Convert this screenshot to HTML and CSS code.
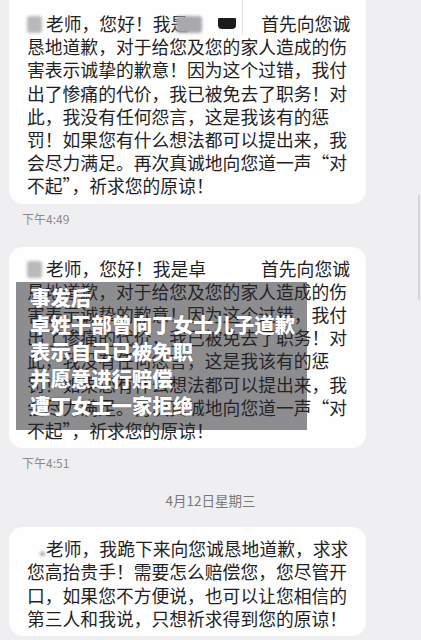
FILE: index.html
```html
<!DOCTYPE html>
<html lang="zh-CN">
<head>
<meta charset="UTF-8">
<meta name="viewport" content="width=device-width, initial-scale=1.0">
<title>短信</title>
<link rel="stylesheet" href="styles.css">
</head>
<body>
<div class="chat">
  <div class="bubble first">
    <span class="smudge"></span>
    <p class="msg">
      <span class="blur name"></span>老师，您好！我是<span class="blur hide"></span><span class="dark"></span><span class="gap"></span>首先向您诚<br>
      恳地道歉，对于给您及您的家人造成的伤<br>
      害表示诚挚的歉意！因为这个过错，我付<br>
      出了惨痛的代价，我已被免去了职务！对<br>
      此，我没有任何怨言，这是我该有的惩<br>
      罚！如果您有什么想法都可以提出来，我<br>
      会尽力满足。再次真诚地向您道一声“对<br>
      不起”，祈求您的原谅！
    </p>
  </div>
  <div class="time">下午4:49</div>

  <div class="bubble">
    <p class="msg">
      <span class="blur name"></span>老师，您好！我是卓<span class="gap wide"></span>首先向您诚<br>
      恳地道歉，对于给您及您的家人造成的伤<br>
      害表示诚挚的歉意！因为这个过错，我付<br>
      出了惨痛的代价，我已被免去了职务！对<br>
      此，我没有任何怨言，这是我该有的惩<br>
      罚！如果您有什么想法都可以提出来，我<br>
      会尽力满足。再次真诚地向您道一声“对<br>
      不起”，祈求您的原谅！
    </p>
    <div class="caption">
      事发后<br>
      卓姓干部曾向丁女士儿子道歉<br>
      表示自己已被免职<br>
      并愿意进行赔偿<br>
      遭丁女士一家拒绝
    </div>
  </div>
  <div class="time">下午4:51</div>

  <div class="date">4月12日星期三</div>

  <div class="bubble">
    <p class="msg">
      <span class="blur dot"></span>老师，我跪下来向您诚恳地道歉，求求<br>
      您高抬贵手！需要怎么赔偿您，您尽管开<br>
      口，如果您不方便说，也可以让您相信的<br>
      第三人和我说，只想祈求得到您的原谅！
    </p>
  </div>
</div>
<div class="scroll"></div>
</body>
</html>
```

FILE: styles.css
```css
body {
  margin: 0;
  background-color: #efeef1;
  font-family: "Noto Sans CJK SC", "Noto Sans", sans-serif;
  color: #1f1f1f;
  overflow: hidden;
  height: 640px;
  position: relative;
}

.chat {
  display: flex;
  flex-direction: column;
  align-items: flex-start;
  padding: 0 55px 0 9px;
}

/* message bubbles */
.bubble {
  position: relative;
  width: 321px;
  background-color: #fefefe;
  border-radius: 14px;
  padding: 10px 18px 6px 18px;
  margin-top: 21px;
}
.bubble.first {
  margin-top: 0;
  padding-top: 12px;
  border-top-left-radius: 0;
  border-top-right-radius: 0;
}

.msg {
  margin: 0;
  font-size: 17.8px;
  line-height: 23.2px;
  white-space: nowrap;
}

/* blurred names */
.blur {
  display: inline-block;
  vertical-align: -2px;
  height: 17px;
  border-radius: 3px;
  filter: blur(1.5px);
}
.name {
  width: 15px;
  margin-right: 4px;
  background-color: #b9b9bc;
}
.hide {
  width: 26px;
  margin-left: -12px;
  background-color: #a9a9ad;
}
.dot {
  width: 5px;
  height: 4px;
  margin: 0 1px 0 13px;
  vertical-align: 0;
  background-color: #9a9a9a;
}
.dark {
  display: inline-block;
  width: 18px;
  height: 11px;
  margin-left: 16px;
  vertical-align: 2px;
  background-color: #1c1c1c;
  border-radius: 1px 1px 4px 4px;
}
.gap {
  display: inline-block;
  width: 25px;
}
.gap.wide {
  width: 55px;
}

.smudge {
  position: absolute;
  left: 233px;
  top: 0;
  width: 1px;
  height: 35px;
  background-color: #e2e2e4;
}

/* overlay caption */
.caption {
  position: absolute;
  left: 7px;
  top: 35px;
  width: 277px;
  height: 146px;
  padding: 2px 0 0 14px;
  background-color: rgba(40, 40, 46, 0.53);
  color: #ffffff;
  font-size: 20.4px;
  font-weight: 900;
  line-height: 27px;
  white-space: nowrap;
  text-shadow: 0 0 2px rgba(0, 0, 0, 0.35);
}

/* timestamps */
.time {
  margin: 8px 0 0 13px;
  font-size: 12px;
  line-height: 14px;
  color: #8b8b8e;
}

.date {
  align-self: stretch;
  margin: 22px 0 0 0;
  padding-left: 46px;
  text-align: center;
  font-size: 13.5px;
  line-height: 16px;
  color: #78787b;
}

.bubble + .bubble,
.date + .bubble {
  margin-top: 19px;
}

.scroll {
  position: absolute;
  left: 418px;
  top: 195px;
  width: 2px;
  height: 105px;
  background-color: #d6d6d9;
}
```
